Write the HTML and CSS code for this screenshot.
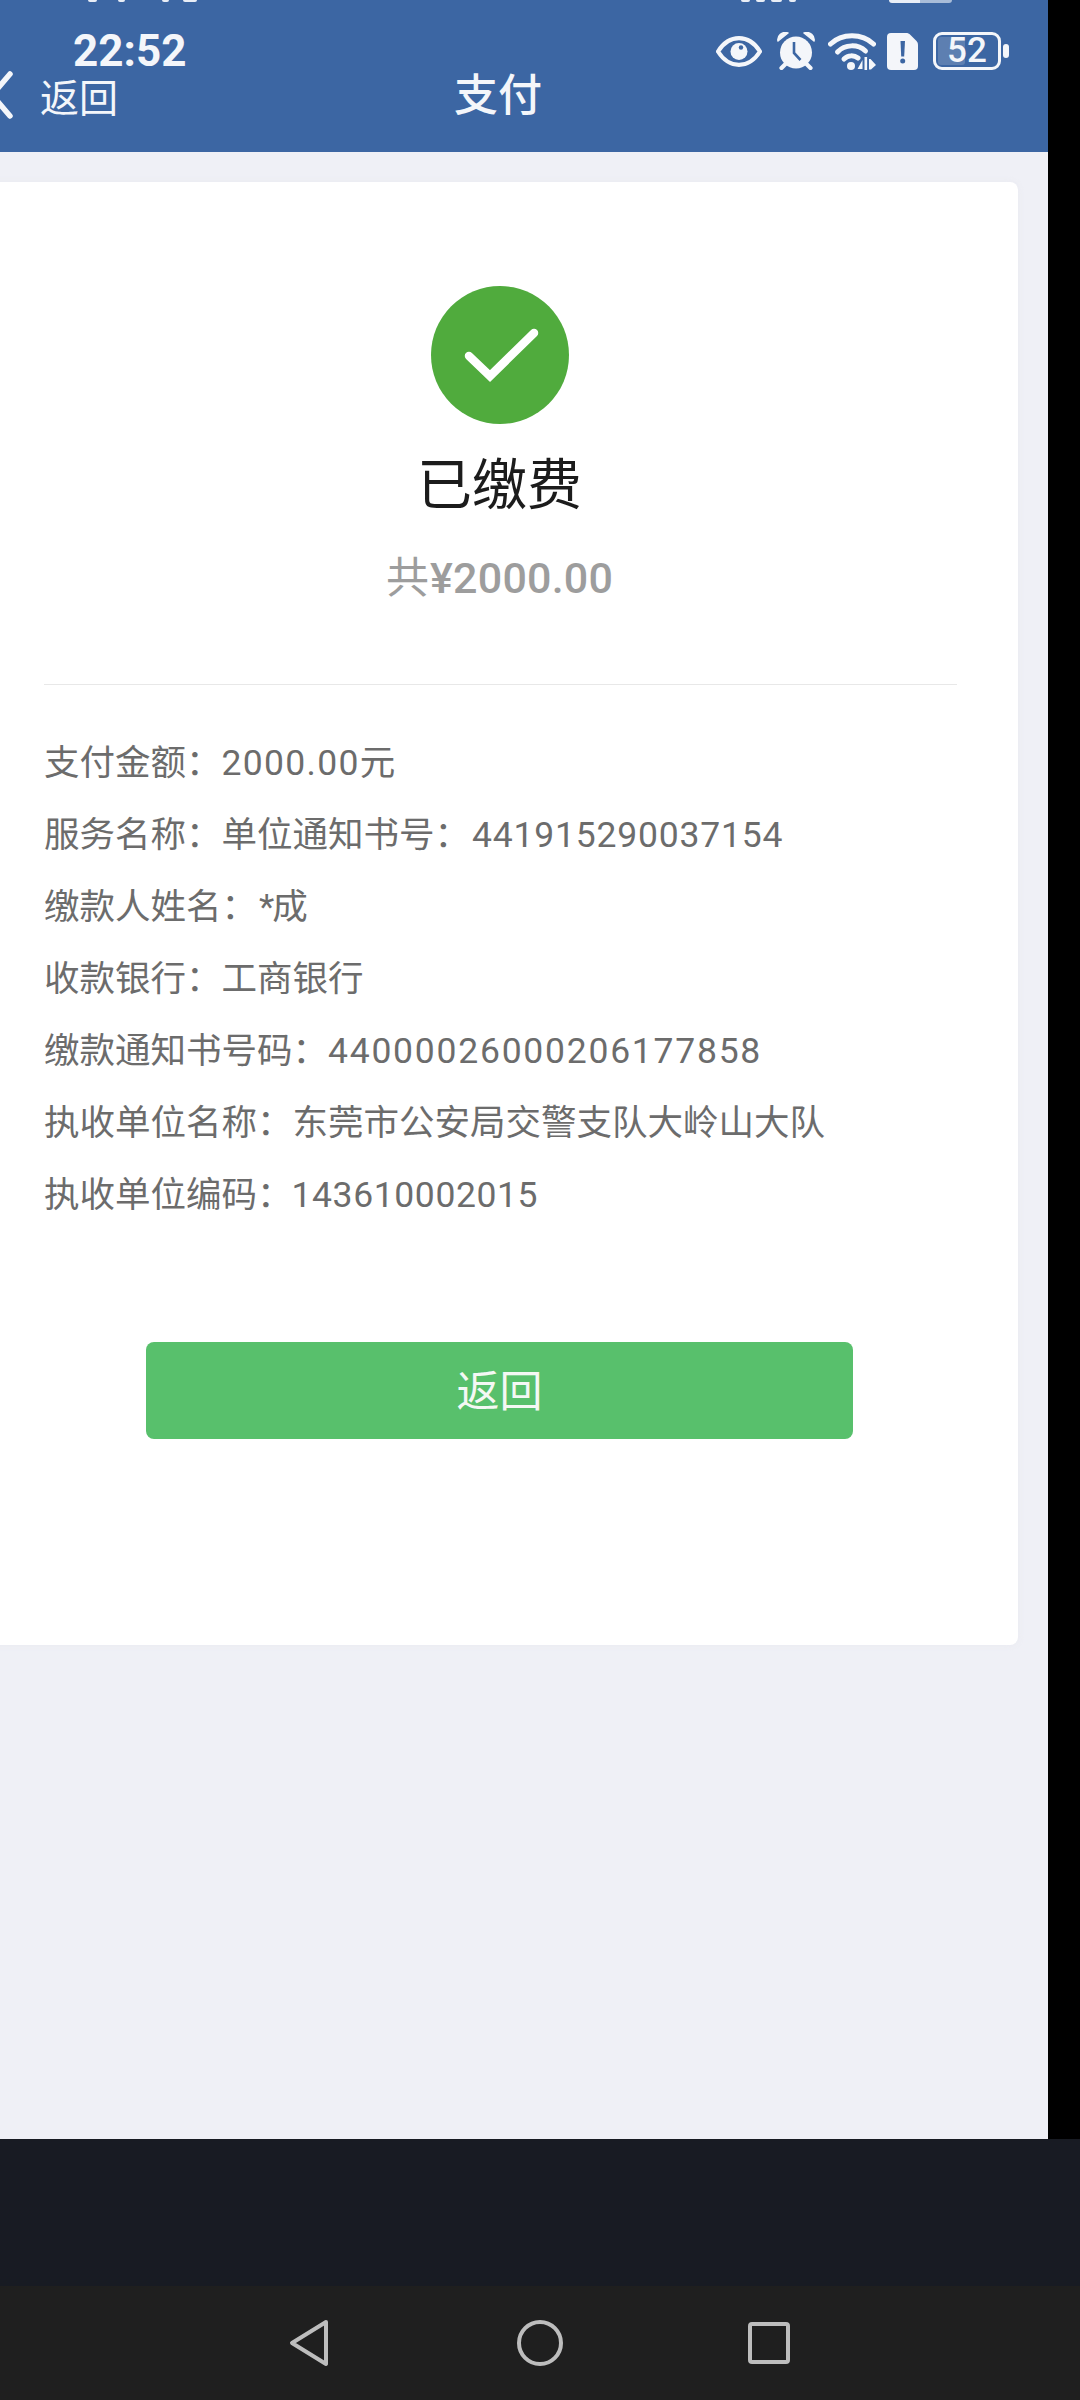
FILE: index.html
```html
<!DOCTYPE html>
<html lang="zh-CN">
<head>
<meta charset="utf-8">
<title>支付</title>
<link rel="stylesheet" href="styles.css">
</head>
<body>
<div class="phone">
  <div class="screen">
    <header class="appbar">
      <div class="clipped-bits" aria-hidden="true">
        <span class="bit b1"></span><span class="bit b2"></span><span class="bit b3"></span><span class="bit b4"></span>
        <span class="bit b5"></span><span class="bit b6"></span><span class="bit b7"></span><span class="bit b8"></span>
        <span class="bit b9"></span><span class="bit b10"></span>
      </div>
      <div class="status">
        <span class="time">22:52</span>
        <div class="status-icons">
          <svg class="ic-eye" viewBox="0 0 46 31"><path d="M2 15.500C8 6 15 2.200 23 2.200S38 6 44 15.500C38 25 31 28.800 23 28.800S8 25 2 15.500Z" fill="none" stroke="#f4f6fa" stroke-width="4.200" stroke-linejoin="round"/><circle cx="23" cy="15.500" r="8.500" fill="#f4f6fa"/><circle cx="25" cy="11.500" r="2.200" fill="#3c66a3"/></svg>
          <svg class="ic-alarm" viewBox="0 0 38 38"><circle cx="19" cy="20.500" r="16" fill="#f4f6fa"/><path d="M1 9C0 4 5 -1 11 1Z" fill="#f4f6fa" stroke="#f4f6fa" stroke-width="1.500" stroke-linejoin="round"/><path d="M37 9C38 4 33 -1 27 1Z" fill="#f4f6fa" stroke="#f4f6fa" stroke-width="1.500" stroke-linejoin="round"/><path d="M4.500 36l5-5M33.500 36l-5-5" stroke="#f4f6fa" stroke-width="4.200" stroke-linecap="round"/><path d="M17 10v11l6.500 7" fill="none" stroke="#3c66a3" stroke-width="2.600"/></svg>
          <svg class="ic-wifi" viewBox="0 0 48 37"><path d="M2.500 11C14 0 34 0 45.500 11" fill="none" stroke="#f4f6fa" stroke-width="5" stroke-linecap="round"/><path d="M9.500 19C17 11 30 11 37.500 18" fill="none" stroke="#f4f6fa" stroke-width="5" stroke-linecap="round"/><path d="M16 26C20 22 26 22 30 25" fill="none" stroke="#f4f6fa" stroke-width="5" stroke-linecap="round"/><circle cx="23" cy="33" r="4" fill="#f4f6fa"/><path d="M34.500 27v9h-5zM36.500 24h2.600v13h-2.600zM41 26h1.500l5.500 6-5 4.500h-2z" fill="#f4f6fa"/></svg>
          <svg class="ic-sim" viewBox="0 0 31 37"><path d="M4 0h15c2 0 3 .6 4.500 2L29 7.500c1.400 1.400 2 2.500 2 4.500v21a4 4 0 0 1-4 4H4a4 4 0 0 1-4-4V4a4 4 0 0 1 4-4Z" fill="#f4f6fa"/><path d="M13.500 8h4.500l-.8 15.500h-3z" fill="#3c66a3"/><circle cx="15.700" cy="28" r="2.500" fill="#3c66a3"/></svg>
          <div class="battery">
            <div class="battery-body"><span class="battery-fill"></span><span class="battery-num">52</span></div>
            <span class="battery-tip"></span>
          </div>
        </div>
      </div>
      <div class="navrow">
        <div class="back">
          <svg class="chevron" viewBox="0 0 24 48"><path d="M21 3 3 24l18 21" fill="none" stroke="#f4f6fa" stroke-width="5.500" stroke-linecap="round" stroke-linejoin="round"/></svg>
          <span>返回</span>
        </div>
        <h1 class="title">支付</h1>
      </div>
    </header>
    <main class="content">
      <section class="card">
        <div class="summary">
          <svg class="okmark" viewBox="0 0 138 138"><circle cx="69" cy="69" r="69" fill="#50ab3d"/><path d="M38 70l21 20 44-43" fill="none" stroke="#fff" stroke-width="8.500" stroke-linecap="round" stroke-linejoin="miter"/></svg>
          <h2 class="paid">已缴费</h2>
          <p class="total"><span class="total-pre">共</span>¥2000.00</p>
        </div>
        <ul class="details">
          <li>支付金额：<span class="num num-mid">2000.00</span>元</li>
          <li>服务名称：单位通知书号：<span class="num num-shift">441915290037154</span></li>
          <li>缴款人姓名：<span class="star">*</span>成</li>
          <li>收款银行：工商银行</li>
          <li>缴款通知书号码：<span class="num num-loose">44000026000206177858</span></li>
          <li>执收单位名称：东莞市公安局交警支队大岭山大队</li>
          <li>执收单位编码：<span class="num num-tight">143610002015</span></li>
        </ul>
        <button class="return-btn" type="button">返回</button>
      </section>
    </main>
  </div>
  <div class="gutter"></div>
</div>
<div class="band"></div>
<nav class="sysnav">
  <svg class="sys-back" viewBox="0 0 40 48"><path d="M37 3 3 24l34 21Z" fill="none" stroke="#bdbdbd" stroke-width="4" stroke-linejoin="round"/></svg>
  <svg class="sys-home" viewBox="0 0 46 46"><circle cx="23" cy="23" r="21" fill="none" stroke="#bdbdbd" stroke-width="4"/></svg>
  <svg class="sys-recent" viewBox="0 0 42 42"><rect x="2" y="2" width="38" height="38" rx="2" fill="none" stroke="#bdbdbd" stroke-width="4"/></svg>
</nav>
</body>
</html>
```
FILE: styles.css
```css
* { box-sizing: border-box; margin: 0; padding: 0; }
html, body { width: 1080px; height: 2400px; overflow: hidden; background: #000; }
body { font-family: Roboto, "Noto Sans CJK SC", sans-serif; }

.phone { display: flex; height: 2139px; }
.screen { width: 1048px; background: #eff0f6; overflow: hidden; display: flex; flex-direction: column; }
.gutter { flex: 1; background: #000; }

.appbar { position: relative; height: 152px; flex: none; background: #3c66a3; color: #f4f6fa; }
.clipped-bits { position: absolute; inset: 0 0 auto 0; height: 3px; }
.bit { position: absolute; top: 0; height: 2px; background: #e9eef6; border-radius: 0 0 2px 2px; }
.b1 { left: 88px; width: 9px; }
.b2 { left: 118px; width: 7px; }
.b3 { left: 162px; width: 7px; }
.b4 { left: 183px; width: 14px; }
.b5 { left: 741px; width: 9px; }
.b6 { left: 756px; width: 9px; }
.b7 { left: 771px; width: 11px; }
.b8 { left: 789px; width: 7px; }
.b9 { left: 889px; width: 31px; height: 3px; border-radius: 0 0 0 3px; }
.b10 { left: 920px; width: 32px; height: 3px; background: #a8bcd8; border-radius: 0 0 3px 0; }

.status { display: flex; justify-content: space-between; align-items: center; height: 40px; margin-top: 31px; padding: 0 39px 0 73px; }
.time { font-size: 44px; font-weight: 700; line-height: 40px; }
.status-icons { display: flex; align-items: center; gap: 11px; }
.ic-eye { width: 46px; height: 31px; margin-right: 4px; }
.ic-alarm { width: 38px; height: 38px; margin-right: 2px; }
.ic-wifi { width: 48px; height: 37px; }
.ic-sim { width: 31px; height: 37px; }
.battery { display: flex; align-items: center; gap: 2px; margin-left: 4px; }
.battery-body { position: relative; width: 68px; height: 38px; border: 3px solid #f4f6fa; border-radius: 9px; padding: 2px; }
.battery-fill { display: block; width: 46%; height: 100%; background: #5d7fb1; border-radius: 3px; }
.battery-num { position: absolute; inset: 0; text-align: center; font-size: 35px; font-weight: 500; line-height: 32px; }
.battery-tip { width: 6px; height: 14px; background: #f4f6fa; border-radius: 3px; }

.navrow { position: relative; display: flex; align-items: center; justify-content: center; height: 50px; }
.back { position: absolute; left: -11px; top: -4px; display: flex; align-items: center; gap: 27px; font-size: 39px; }
.chevron { width: 24px; height: 48px; }
.title { margin-right: 52px; font-size: 44px; font-weight: 500; line-height: 50px; }

.content { flex: 1; padding: 30px 30px 0 0; margin-left: -26px; }
.card { background: #fff; height: 1463px; border-radius: 8px; padding: 104px 0 0 70px; box-shadow: 0 0 6px rgba(230, 230, 236, .6); }
.summary { position: relative; display: flex; flex-direction: column; align-items: center; margin-left: -70px; padding-left: 7px; height: 398px; }
.okmark { width: 138px; height: 138px; flex: none; }
.paid { margin-top: 23px; font-size: 55px; font-weight: 400; line-height: 76px; color: #1c1c1c; }
.total { margin-top: 25px; font-size: 43px; font-weight: 500; color: #9d9d9d; line-height: 60px; letter-spacing: .2px; }
.total-pre { font-weight: 400; margin-right: 1px; }
.summary::after { content: ""; position: absolute; left: 70px; right: 61px; bottom: -1px; height: 1px; background: #e8e8e8; }

.details { list-style: none; margin-top: 43px; color: #6c6c6c; font-size: 35.500px; line-height: 72px; }
.details li { height: 72px; white-space: nowrap; }
.num { letter-spacing: .8px; }
.num-mid { letter-spacing: 1.300px; }
.num-loose { letter-spacing: 1.750px; }
.num-tight { letter-spacing: .6px; margin-left: -1px; }
.num-shift { margin-left: 2px; }
.star { margin-left: 2px; margin-right: -2px; }

.return-btn { display: block; margin: 111px 0 0 102px; width: 707px; height: 97px; padding-bottom: 5px; border: 0; border-radius: 8px; background: #58c06c; color: #f4f8f4; font: 400 43px Roboto, "Noto Sans CJK SC", sans-serif; }

.band { height: 147px; background: #181b23; }
.sysnav { position: relative; height: 114px; background: #1f1f1f; }
.sysnav svg { position: absolute; }
.sys-back { left: 289px; top: 33px; width: 40px; height: 48px; }
.sys-home { left: 517px; top: 34px; width: 46px; height: 46px; }
.sys-recent { left: 748px; top: 36px; width: 42px; height: 42px; }
```
